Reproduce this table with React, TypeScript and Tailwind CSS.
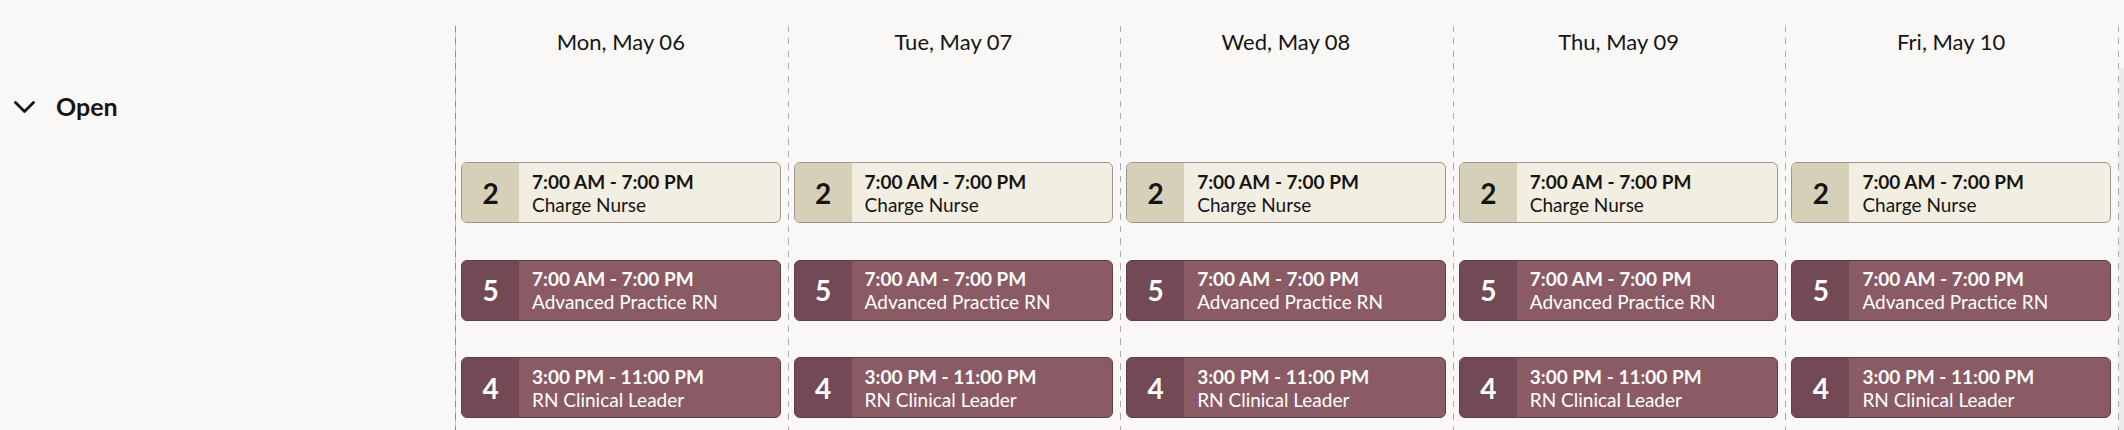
import React from "react";

const days = ["Mon, May 06", "Tue, May 07", "Wed, May 08", "Thu, May 09", "Fri, May 10"];

type Shift = { count: number; time: string; role: string; tone: "tan" | "maroon" };

const shifts: Shift[] = [
  { count: 2, time: "7:00 AM - 7:00 PM", role: "Charge Nurse", tone: "tan" },
  { count: 5, time: "7:00 AM - 7:00 PM", role: "Advanced Practice RN", tone: "maroon" },
  { count: 4, time: "3:00 PM - 11:00 PM", role: "RN Clinical Leader", tone: "maroon" },
];

function DashLine({ strong }: { strong?: boolean }) {
  return strong ? (
    <div className="w-px shrink-0 self-stretch bg-[repeating-linear-gradient(to_bottom,#8e8e8e_0_6px,#c4c4c4_6px_12.5px)]" />
  ) : (
    <div className="w-px shrink-0 self-stretch bg-[repeating-linear-gradient(to_bottom,#ababab_0_6px,transparent_6px_12.5px)]" />
  );
}

function ShiftCard({ s }: { s: Shift }) {
  const tan = s.tone === "tan";
  return (
    <div
      className={
        tan
          ? "flex h-[61px] rounded-[6px] border border-[#9b978e] bg-[#f2eee2] text-[#161513] overflow-hidden"
          : "flex h-[61px] rounded-[6px] border border-[#5e3e47] bg-[#8b5b65] text-white overflow-hidden"
      }
    >
      <div
        className={
          tan
            ? "w-[57px] shrink-0 flex items-center justify-center bg-[#d6d0b8] text-[28px] font-bold"
            : "w-[57px] shrink-0 flex items-center justify-center bg-[#734955] text-[28px] font-bold"
        }
      >
        {s.count}
      </div>
      <div className="flex flex-col justify-center pl-[13px] leading-[23px] text-[19px]">
        <div className="font-bold">{s.time}</div>
        <div>{s.role}</div>
      </div>
    </div>
  );
}

export default function App() {
  return (
    <div className="w-[2124px] h-[430px] overflow-hidden bg-[#f9f8f6] flex font-['Lato','Noto_Sans',sans-serif] text-[#161513]">
      <div className="w-[455px] shrink-0 pt-[91px] pl-[14px]">
        <div className="flex items-center h-[32px] gap-[21px]">
          <svg width="21" height="13" viewBox="0 0 21 13" fill="none">
            <polyline points="1.5,1.5 10.5,10.5 19.5,1.5" stroke="#161513" strokeWidth="2.8" strokeLinecap="round" strokeLinejoin="round" />
          </svg>
          <span className="text-[25px] font-bold">Open</span>
        </div>
      </div>
      <div className="flex flex-1 pt-[26px]">
        {days.map((d, i) => (
          <div key={d} className="flex flex-1 min-w-0">
            <DashLine strong={i === 0} />
            <div className="flex-1 min-w-0 flex flex-col pl-[5px] pr-[7px]">
              <div className="h-[30px] flex items-center justify-center text-[22px]">{d}</div>
              <div className="mt-[106px] flex flex-col gap-[36.5px]">
                {shifts.map((s) => (
                  <ShiftCard key={s.role} s={s} />
                ))}
              </div>
            </div>
          </div>
        ))}
        <DashLine />
      </div>
      <div className="w-[5px] shrink-0 mt-[68px] bg-[#ebebeb]" />
    </div>
  );
}
